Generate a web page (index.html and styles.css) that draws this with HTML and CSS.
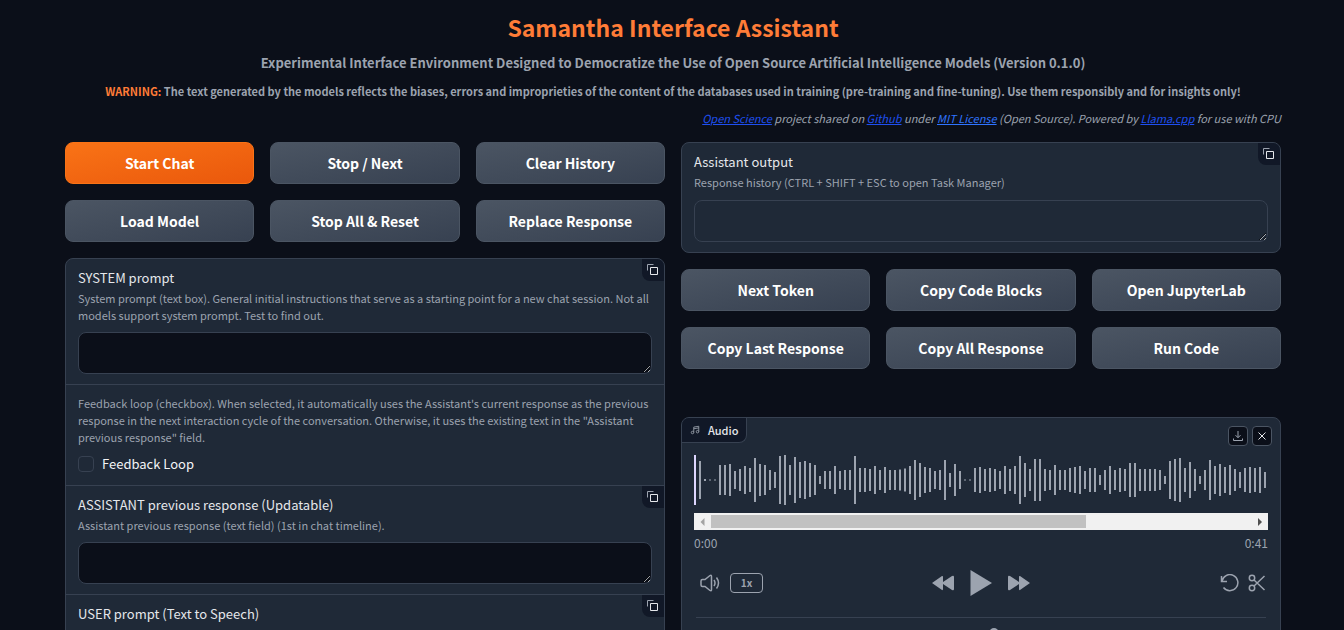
FILE: index.html
```html
<!DOCTYPE html>
<html lang="en">
<head>
<meta charset="utf-8">
<meta name="viewport" content="width=device-width, initial-scale=1">
<title>Samantha Interface Assistant</title>
<link rel="stylesheet" href="styles.css">
</head>
<body>
<svg class="sprite" aria-hidden="true">
  <symbol id="copy" viewBox="0 0 12 12">
    <path d="M1 7V1h6" fill="none" stroke="#9ca3af" stroke-width="1" transform="translate(-.5 -.5)"/>
    <path d="M3.500 3.500h7v7h-7z" fill="none" stroke="#e5e7eb" stroke-width="1"/>
  </symbol>
</svg>
<main class="page">
  <header class="intro">
    <h1 class="title">Samantha Interface Assistant</h1>
    <h3 class="subtitle">Experimental Interface Environment Designed to Democratize the Use of Open Source Artificial Intelligence Models (Version 0.1.0)</h3>
    <p class="warning"><span class="accent">WARNING:</span> The text generated by the models reflects the biases, errors and improprieties of the content of the databases used in training (pre-training and fine-tuning). Use them responsibly and for insights only!</p>
    <p class="credits"><a href="#science">Open Science</a> project shared on <a href="#github">Github</a> under <a class="bright" href="#license">MIT License</a> (Open Source). Powered by <a href="#llama">Llama.cpp</a> for use with CPU</p>
  </header>
  <div class="columns">
    <section class="column">
      <div class="buttons">
        <button class="btn primary" type="button">Start Chat</button>
        <button class="btn" type="button">Stop / Next</button>
        <button class="btn" type="button">Clear History</button>
        <button class="btn" type="button">Load Model</button>
        <button class="btn" type="button">Stop All &amp; Reset</button>
        <button class="btn" type="button">Replace Response</button>
      </div>
      <div class="card">
        <div class="field">
          <label class="label" for="system">SYSTEM prompt</label>
          <p class="hint">System prompt (text box). General initial instructions that serve as a starting point for a new chat session. Not all models support system prompt. Test to find out.</p>
          <textarea class="box" id="system" rows="1"></textarea>
          <button class="copy" type="button" aria-label="Copy"><svg><use href="#copy"/></svg></button>
        </div>
        <div class="field check-field">
          <p class="hint">Feedback loop (checkbox). When selected, it automatically uses the Assistant's current response as the previous response in the next interaction cycle of the conversation. Otherwise, it uses the existing text in the "Assistant previous response" field.</p>
          <label class="check"><input type="checkbox">Feedback Loop</label>
        </div>
        <div class="field">
          <label class="label" for="previous">ASSISTANT previous response (Updatable)</label>
          <p class="hint">Assistant previous response (text field) (1st in chat timeline).</p>
          <textarea class="box" id="previous" rows="1"></textarea>
          <button class="copy" type="button" aria-label="Copy"><svg><use href="#copy"/></svg></button>
        </div>
        <div class="field user">
          <label class="label" for="user">USER prompt (Text to Speech)</label>
          <textarea class="box" id="user" rows="1"></textarea>
          <button class="copy" type="button" aria-label="Copy"><svg><use href="#copy"/></svg></button>
        </div>
      </div>
    </section>
    <section class="column">
      <div class="card">
        <div class="field output">
          <label class="label" for="output">Assistant output</label>
          <p class="hint">Response history (CTRL + SHIFT + ESC to open Task Manager)</p>
          <textarea class="box" id="output" rows="1" readonly></textarea>
          <button class="copy" type="button" aria-label="Copy"><svg><use href="#copy"/></svg></button>
        </div>
      </div>
      <div class="buttons">
        <button class="btn" type="button">Next Token</button>
        <button class="btn" type="button">Copy Code Blocks</button>
        <button class="btn" type="button">Open JupyterLab</button>
        <button class="btn" type="button">Copy Last Response</button>
        <button class="btn" type="button">Copy All Response</button>
        <button class="btn" type="button">Run Code</button>
      </div>
      <div class="card audio">
        <div class="audio-head">
          <div class="tab">
            <svg class="note" viewBox="0 0 24 24"><path d="M9 18V5l12-2v13M9 9l12-2"/><circle cx="6" cy="18" r="3"/><circle cx="18" cy="16" r="3"/></svg>
            Audio
          </div>
          <div class="tools">
            <button class="tool" type="button" aria-label="Download"><svg viewBox="0 0 12 12"><path d="M6 1v6.500M3.500 5.200 6 7.700l2.500-2.500M1.500 8.500v2h9v-2"/></svg></button>
            <button class="tool" type="button" aria-label="Clear"><svg viewBox="0 0 12 12"><path class="cross" d="m2.500 2.500 7 7m0-7-7 7"/></svg></button>
          </div>
        </div>
        <svg class="wave" viewBox="0 0 574 50" preserveAspectRatio="none"><path class="played" d="M1 0v50"/><path id="bars"/></svg>
        <div class="scroll">
          <svg class="arrow" viewBox="0 0 17 17"><path d="M10.500 5v8L6.500 9z" fill="#a3a3a3"/></svg>
          <div class="track"><div class="thumb"></div></div>
          <svg class="arrow" viewBox="0 0 17 17"><path d="M7 5v8l4-4z" fill="#505050"/></svg>
        </div>
        <div class="times"><span>0:00</span><span>0:41</span></div>
        <div class="controls">
          <div class="group">
            <button class="icon" type="button" aria-label="Volume"><svg width="20" height="18" viewBox="0 0 20 18"><path d="M1 7q0-1.500 1.500-1.500H5l5-4q1.500-1 1.500 1v13q0 2-1.500 1l-5-4H2.500Q1 12.500 1 11zM14 6q2 3 0 6M16.500 3.500q4 5.500 0 11"/></svg></button>
            <button class="speed" type="button">1x</button>
          </div>
          <div class="group play">
            <button class="icon solid" type="button" aria-label="Skip back"><svg width="22" height="16" viewBox="0 0 22 16"><path d="M0 8 10 1q1-.500 1 1v5l9-6q2-1 2 1v12q0 2-2 1l-9-6v5q0 1.500-1 1z"/></svg></button>
            <button class="icon solid" type="button" aria-label="Play"><svg width="22" height="26" viewBox="0 0 22 26"><path d="M.500 0 22 13 .500 26z"/></svg></button>
            <button class="icon solid" type="button" aria-label="Skip forward"><svg width="22" height="16" viewBox="0 0 22 16"><path d="M22 8 12 1q-1-.500-1 1v5L2 1Q0 0 0 2v12q0 2 2 1l9-6v5q0 1.500 1 1z"/></svg></button>
          </div>
          <div class="group end">
            <button class="icon" type="button" aria-label="Undo"><svg width="20" height="18" viewBox="0 0 20 18"><path d="M1.500 2v5.500H7M2 7.200A8 8 0 1 1 3.500 13.500"/></svg></button>
            <button class="icon" type="button" aria-label="Trim"><svg width="18" height="18" viewBox="0 0 18 18"><circle cx="4" cy="4" r="2.700"/><circle cx="4" cy="14" r="2.700"/><path d="M6 6l10.500 10M6 12 16.500 2"/></svg></button>
          </div>
        </div>
        <div class="sources"><svg width="20" height="20" viewBox="0 0 20 20"><rect x="6.500" y="1" width="7" height="11" rx="3.500"/><path d="M3 9q0 6 7 6t7-6M10 15v4"/></svg></div>
      </div>
    </section>
  </div>
</main>
<script src="wave.js"></script>
</body>
</html>
```
FILE: styles.css
```css
* { box-sizing: border-box; }
html { background: #0b0f19; color-scheme: dark; }
body {
  margin: 0;
  height: 100vh;
  overflow: hidden;
  background: #0b0f19;
  color: #f3f4f6;
  font: 12px/17px "Source Sans Pro", "Noto Sans CJK SC", sans-serif;
}
h1, h3, p { margin: 0; }
button { font-family: inherit; cursor: pointer; padding: 0; }
.sprite { position: absolute; width: 0; height: 0; }
.page { padding: 11px 63px 0 65px; }
.intro { text-align: center; color: #9ca3af; }
.title { color: #ff7c37; font-size: 23px; line-height: 32px; font-weight: 700; }
.subtitle { margin-top: 9px; font-size: 13px; line-height: 22px; font-weight: 700; }
.warning { margin-top: 8px; font-size: 11px; line-height: 18px; font-weight: 700; }
.accent { color: #ff7c37; }
.credits { margin-top: 8px; text-align: right; font-size: 11px; line-height: 20px; font-style: italic; }
.credits a { color: #1f4ff0; }
.credits .bright { color: #2f74ff; }
.columns { display: grid; grid-template-columns: 1fr 1fr; gap: 16px; margin-top: 14px; }
.column { display: flex; flex-direction: column; gap: 16px; min-width: 0; }
.buttons { display: grid; grid-template-columns: repeat(3, 1fr); gap: 16px; }
.btn {
  height: 42px;
  border: 1px solid #4b5563;
  border-radius: 8px;
  background: linear-gradient(to bottom right, #4b5563, #374151);
  color: #fff;
  font-size: 14px;
  font-weight: 700;
  line-height: 20px;
}
.primary { border-color: #f97316; background: linear-gradient(to bottom right, #f97316, #ea580c); }
.card { border: 1px solid #374151; border-radius: 8px; background: #1f2937; overflow: hidden; }
.field { position: relative; padding: 10px 12px; }
.field + .field { border-top: 1px solid #374151; }
.label { display: block; margin-bottom: 4px; font-size: 13px; line-height: 17px; color: #e5e7eb; }
.hint { margin-bottom: 8px; font-size: 11px; line-height: 17px; color: #9ca3af; }
.box {
  display: block;
  width: 100%;
  height: 42px;
  padding: 10px;
  border: 1px solid #374151;
  border-radius: 8px;
  background: #0b0f19;
  color: #f3f4f6;
  font: inherit;
  resize: vertical;
}
.output .hint { margin-bottom: 9px; }
.output .box { background: #1f2937; }
.user .label { margin-bottom: 28px; }
.copy {
  position: absolute;
  top: 0;
  right: 0;
  display: grid;
  place-items: center;
  width: 22px;
  height: 22px;
  border: 0;
  border-radius: 0 0 0 8px;
  background: #111827;
}
.copy svg { width: 12px; height: 12px; }
.check-field { padding-bottom: 13px; }
.check-field .hint { margin-bottom: 10px; }
.check { display: flex; align-items: center; gap: 8px; font-size: 13px; line-height: 16px; }
.check input {
  appearance: none;
  width: 16px;
  height: 16px;
  margin: 0;
  border: 1px solid #374151;
  border-radius: 4px;
  background: #1f2937;
}
.audio { margin-top: 32px; padding-bottom: 12px; }
.audio-head { display: flex; justify-content: space-between; height: 37px; }
.tab {
  display: flex;
  align-items: center;
  gap: 8px;
  height: 25px;
  padding: 0 8px;
  border: solid #374151;
  border-width: 0 1px 1px 0;
  border-radius: 0 0 8px 0;
  background: #111827;
  font-size: 11px;
  font-weight: 500;
  color: #e5e7eb;
}
.note { width: 10px; height: 10px; fill: none; stroke: #9ca3af; stroke-width: 2; }
.tools { display: flex; gap: 4px; padding: 8px; }
.tool {
  display: grid;
  place-items: center;
  width: 20px;
  height: 20px;
  border: 1px solid #4b5563;
  border-radius: 4px;
  background: #0b0f19;
}
.tool svg { width: 12px; height: 12px; fill: none; stroke: #9ca3af; stroke-width: 1; }
.tool .cross { stroke: #e5e7eb; }
.wave { display: block; width: calc(100% - 24px); height: 50px; margin: 0 12px; fill: none; stroke: #9ca3af; stroke-width: 2; }
.played { stroke: #ddd6fe; }
.scroll { display: flex; height: 17px; margin: 8px 12px 0; background: #f1f1f1; }
.arrow { width: 17px; height: 17px; }
.track { flex: 1; padding: 2px 0; }
.thumb { width: 69.4%; height: 13px; background: #c1c1c1; }
.times { display: flex; justify-content: space-between; margin: 3px 12px 0; font-size: 12px; line-height: 20px; color: #9ca3af; }
.controls { display: grid; grid-template-columns: 1fr auto 1fr; align-items: center; height: 26px; margin: 17px 14px 0; }
.group { display: flex; align-items: center; gap: 10px; padding-left: 4px; }
.play { gap: 16px; padding: 0; }
.end { justify-content: flex-end; gap: 8px; }
.icon { display: flex; border: 0; background: none; }
.icon svg { fill: none; stroke: #9ca3af; stroke-width: 1.5; }
.icon.solid svg { fill: #9ca3af; stroke: none; }
.speed {
  width: 33px;
  height: 20px;
  border: 1px solid #9ca3af;
  border-radius: 4px;
  background: none;
  color: #9ca3af;
  font-size: 10px;
  font-weight: 700;
  line-height: 16px;
}
.sources { display: flex; justify-content: center; margin: 21px 14px 0; padding: 10px 0 0 26px; border-top: 1px solid #374151; }
.sources svg { fill: none; stroke: #9ca3af; stroke-width: 2; }
```
FILE: wave.js
```js
const heights = [38, 2, 1, 1, 30, 30, 32, 18, 22, 28, 24, 44, 32, 30, 20, 16, 48, 50, 30, 46, 36, 38, 34, 30, 8,
  18, 18, 28, 18, 20, 20, 48, 24, 24, 22, 28, 20, 26, 20, 20, 21, 23, 28, 40, 34, 26, 24, 18, 20, 40, 14, 32, 18,
  1, 1, 24, 26, 22, 24, 22, 18, 28, 22, 28, 48, 34, 22, 42, 42, 22, 20, 30, 20, 20, 24, 26, 28, 18, 24, 24, 10,
  20, 28, 20, 24, 22, 34, 34, 22, 22, 22, 22, 20, 8, 38, 42, 44, 24, 36, 22, 8, 20, 40, 28, 32, 26, 30, 22, 16,
  24, 26, 24, 26, 16];
document.getElementById("bars").setAttribute("d",
  heights.map((h, i) => `M${6 + i * 5} ${25 - h / 2}v${h}`).join(""));
```
